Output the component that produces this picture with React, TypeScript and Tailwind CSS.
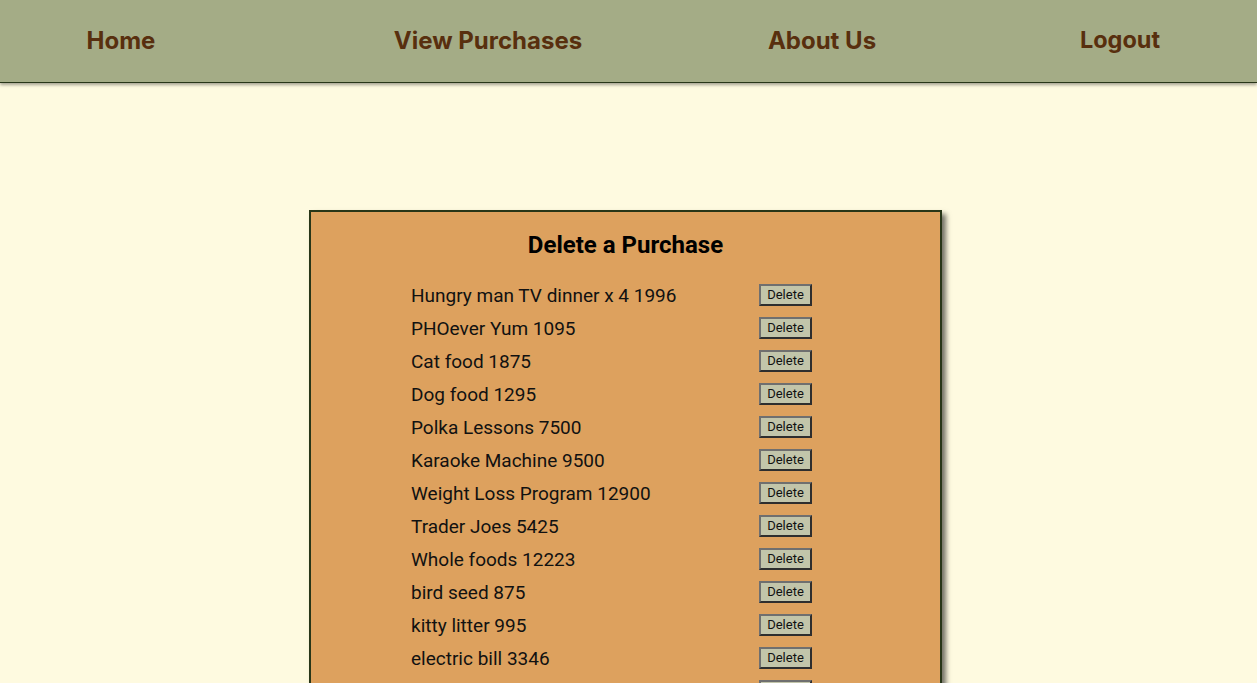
import React from "react";

const items = [
  "Hungry man TV dinner x 4 1996",
  "PHOever Yum 1095",
  "Cat food 1875",
  "Dog food 1295",
  "Polka Lessons 7500",
  "Karaoke Machine 9500",
  "Weight Loss Program 12900",
  "Trader Joes 5425",
  "Whole foods 12223",
  "bird seed 875",
  "kitty litter 995",
  "electric bill 3346",
  "water bill 4210",
];

export default function App() {
  return (
    <div className="min-h-screen bg-[#fefae0] font-['Roboto',sans-serif] overflow-hidden h-[683px]">
      <nav className="h-[83px] bg-[#a4ac86] border-b border-[#283618] shadow-[0_2px_3px_rgba(0,0,0,0.35)] flex items-center text-[24px] font-bold text-[#582f0e] font-['Inter',sans-serif]">
        <div className="ml-[21px] w-[200px] text-center">Home</div>
        <div className="ml-[167px] w-[200px] text-center">View Purchases</div>
        <div className="ml-[134px] w-[200px] text-center">About Us</div>
        <div className="ml-[98px] w-[200px] text-center -mt-[2px] text-[23.5px]">Logout</div>
      </nav>
      <div className="pt-[127px]">
        <div className="ml-[309px] w-[633px] bg-[#dda15e] border-2 border-[#283618] shadow-[4px_4px_5px_rgba(0,0,0,0.55)] pt-[19px] pb-6">
          <h2 className="text-center text-[24px] leading-[28px] font-bold text-black">Delete a Purchase</h2>
          <ul className="mt-[19px] pl-[100px]">
            {items.map((it) => (
              <li key={it} className="flex items-center h-[33px]">
                <span className="w-[348px] text-[19px] text-[#111] pt-[3px]">{it}</span>
                <button className="w-[53px] h-[22px] bg-[#c2c5aa] border-2 border-t-[#6f6f6f] border-l-[#6f6f6f] border-b-[#2e2e2e] border-r-[#2e2e2e] text-[13px] leading-none text-[#111] flex items-center justify-center">
                  Delete
                </button>
              </li>
            ))}
          </ul>
        </div>
      </div>
    </div>
  );
}
